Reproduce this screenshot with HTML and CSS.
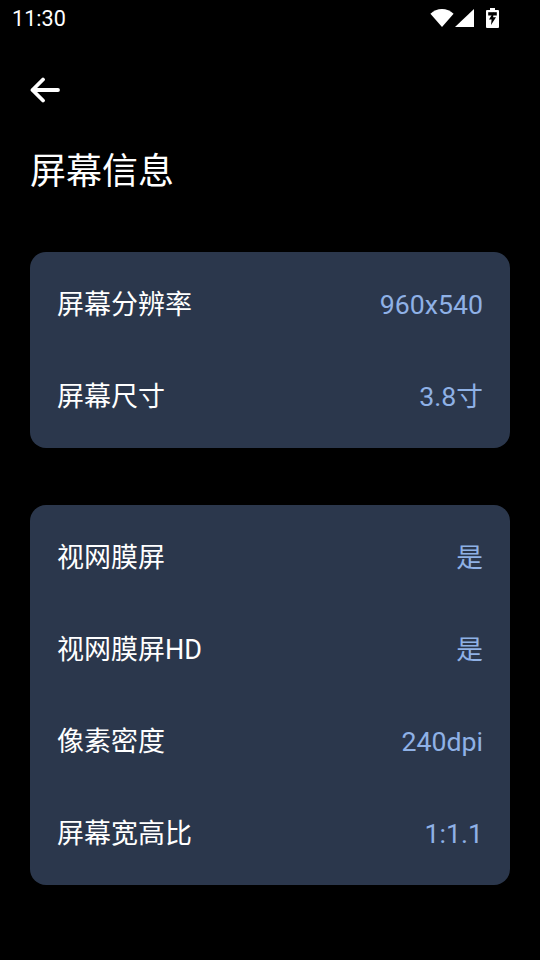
FILE: index.html
```html
<!DOCTYPE html>
<html lang="zh-CN">

<head>
    <meta charset="UTF-8">
    <meta name="viewport" content="width=device-width, initial-scale=1.0">
    <title>屏幕信息</title>
    <link rel="stylesheet" href="styles.css">
</head>

<body>
    <div class="status-bar">
        <span class="time">11:30</span>
        <div class="status-icons">
            <svg viewBox="0 0 24 18" width="24" height="18">
                <path d="M12 18 0.4 4.8C3.6 2 7.6 0 12 0s8.4 2 11.6 4.8z" fill="#fff" />
            </svg>
            <svg viewBox="0 0 19 18" width="19" height="18">
                <path d="M0 18 19 0v18z" fill="#fff" />
            </svg>
            <svg viewBox="0 0 13 20" width="13" height="20">
                <path d="M4 0h5v2h3a1 1 0 0 1 1 1v16a1 1 0 0 1-1 1H1a1 1 0 0 1-1-1V3a1 1 0 0 1 1-1h3z" fill="#fff" />
                <path d="M2.200 4.200h8.600v3.300H2.200z" fill="#000" />
                <path d="M7.500 4 3 11.500h2.600L5 17l5-7.800H7.200z" fill="#000" />
            </svg>
        </div>
    </div>

    <div class="back">
        <svg viewBox="0 0 30 26" width="30" height="26">
            <path d="M28 13H2.500M13 2.500 2.500 13 13 23.500" fill="none" stroke="#fff" stroke-width="3.800" stroke-linecap="round" stroke-linejoin="round" />
        </svg>
    </div>

    <h1 class="title">屏幕信息</h1>

    <div class="card">
        <div class="row"><span class="label">屏幕分辨率</span><span class="value">960x540</span></div>
        <div class="row"><span class="label">屏幕尺寸</span><span class="value">3.8寸</span></div>
    </div>

    <div class="card">
        <div class="row"><span class="label">视网膜屏</span><span class="value">是</span></div>
        <div class="row"><span class="label">视网膜屏HD</span><span class="value">是</span></div>
        <div class="row"><span class="label">像素密度</span><span class="value">240dpi</span></div>
        <div class="row"><span class="label">屏幕宽高比</span><span class="value">1:1.1</span></div>
    </div>
</body>

</html>
```

FILE: styles.css
```css
html,
body {
    margin: 0;
    padding: 0;
    background: #000;
}

body {
    width: 540px;
    height: 960px;
    overflow: hidden;
    color: #fff;
    font-family: Roboto, "Noto Sans CJK SC", sans-serif;
}

.status-bar {
    display: flex;
    align-items: center;
    justify-content: space-between;
    height: 37px;
    padding: 0 41px 0 12px;
}

.time {
    font-size: 21.600px;
}

.status-icons {
    display: flex;
    align-items: center;
    gap: 1px;
    margin-bottom: 1px;
}

.status-icons svg:last-child {
    margin-left: 11px;
}

.back {
    display: flex;
    padding: 40px 0 0 30px;
    height: 26px;
}

.title {
    margin: 46px 0 0 30px;
    font-size: 36px;
    font-weight: 400;
    line-height: 46px;
}

.card {
    margin: 57px 30px 0;
    padding: 6px 27px;
    background: #2b374c;
    border-radius: 16px;
}

.card + .card {
    margin-top: 57px;
}

.row {
    display: flex;
    align-items: center;
    justify-content: space-between;
    box-sizing: border-box;
    height: 92px;
    padding-top: 2px;
    font-size: 27px;
    line-height: 32px;
}

.value {
    font-size: 26.700px;
    color: #8fb1e6;
}
```
